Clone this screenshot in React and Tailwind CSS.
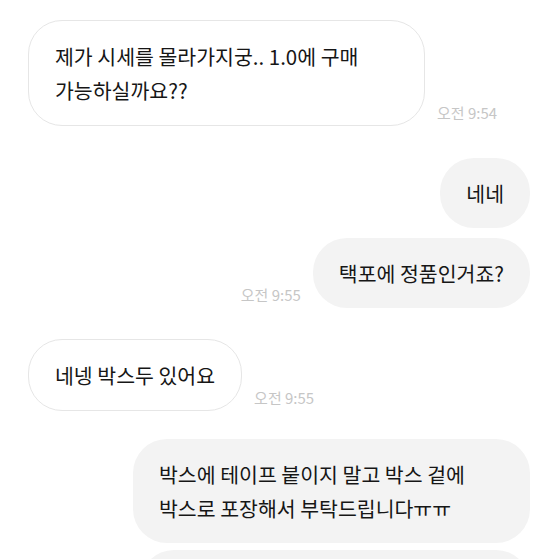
const font = { fontFamily: '"Apple SD Gothic Neo", "Noto Sans CJK KR", "Noto Sans", sans-serif' };

const messages = [
  { id: 1, from: 'them', text: '제가 시세를 몰라가지궁.. 1.0에 구매 가능하실까요??', time: '오전 9:54', gap: 'mt-[20px]' },
  { id: 2, from: 'me', text: '네네', gap: 'mt-[32px]' },
  { id: 3, from: 'me', text: '택포에 정품인거죠?', time: '오전 9:55', gap: 'mt-[10px]' },
  { id: 4, from: 'them', text: '네넹 박스두 있어요', time: '오전 9:55', gap: 'mt-[31px]' },
  { id: 5, from: 'me', text: '박스에 테이프 붙이지 말고 박스 겉에 박스로 포장해서 부탁드립니다ㅠㅠ', gap: 'mt-[28px]' },
];

// Timestamp sits beside the bubble, pinned near its bottom edge.
function Time({ children }) {
  return (
    <span className="shrink-0 mb-[4px] text-[15px] leading-[18px] text-[#c6c6c6] whitespace-nowrap">
      {children}
    </span>
  );
}

function Bubble({ msg }) {
  const mine = msg.from === 'me';
  return (
    <div className={`flex items-end gap-[12px] ${mine ? 'justify-end' : 'justify-start'} ${msg.gap}`}>
      {mine && msg.time && <Time>{msg.time}</Time>}
      <div
        className={`max-w-[397px] px-[26px] py-[18px] rounded-[34px] text-[20.5px] leading-[34px] text-[#161616] break-keep ${
          mine ? 'bg-[#f3f3f3]' : 'bg-white border border-[#e6e6e6]'
        }`}
      >
        {msg.text}
      </div>
      {!mine && msg.time && <Time>{msg.time}</Time>}
    </div>
  );
}

export default function App() {
  return (
    <div className="h-[559px] w-[559px] overflow-hidden bg-white" style={font}>
      <div className="flex flex-col pl-[28px] pr-[29px]">
        {messages.map((m) => (
          <Bubble key={m.id} msg={m} />
        ))}
        {/* next outgoing message, cut off at the bottom edge */}
        <div className="flex justify-end mt-[7px]">
          <div className="w-[390px] h-[70px] rounded-[34px] bg-[#f3f3f3]" />
        </div>
      </div>
    </div>
  );
}
